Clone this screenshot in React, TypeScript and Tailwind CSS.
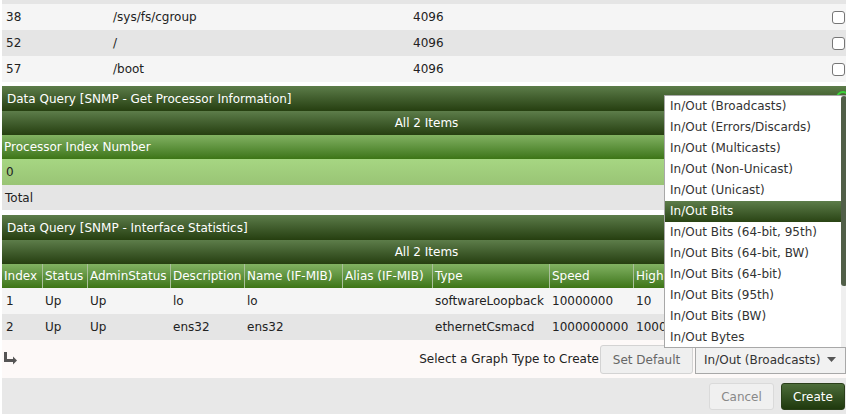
import React from 'react'

const titleBar = 'bg-linear-to-b from-[#5d7d4a] to-[#263f10] text-white'
const colBar = 'bg-linear-to-b from-[#82b262] to-[#3d7515] text-white'

const mounts = [
  { id: '38', path: '/sys/fs/cgroup', size: '4096', bg: 'bg-[#f5f5f5]' },
  { id: '52', path: '/', size: '4096', bg: 'bg-[#e5e5e5]' },
  { id: '57', path: '/boot', size: '4096', bg: 'bg-[#f5f5f5]' },
]

const ifCols = [
  { label: 'Index', w: 'w-[40px]' },
  { label: 'Status', w: 'w-[45px]' },
  { label: 'AdminStatus', w: 'w-[83px]' },
  { label: 'Description', w: 'w-[74px]' },
  { label: 'Name (IF-MIB)', w: 'w-[98px]' },
  { label: 'Alias (IF-MIB)', w: 'w-[90px]' },
  { label: 'Type', w: 'w-[117px]' },
  { label: 'Speed', w: 'w-[84px]' },
  { label: 'High', w: 'w-[120px]' },
]

const ifRows = [
  { cells: ['1', 'Up', 'Up', 'lo', 'lo', '', 'softwareLoopback', '10000000', '10'], bg: 'bg-[#f5f5f5]' },
  { cells: ['2', 'Up', 'Up', 'ens32', 'ens32', '', 'ethernetCsmacd', '1000000000', '1000'], bg: 'bg-[#e5e5e5]' },
]

const graphTypes = [
  'In/Out (Broadcasts)',
  'In/Out (Errors/Discards)',
  'In/Out (Multicasts)',
  'In/Out (Non-Unicast)',
  'In/Out (Unicast)',
  'In/Out Bits',
  'In/Out Bits (64-bit, 95th)',
  'In/Out Bits (64-bit, BW)',
  'In/Out Bits (64-bit)',
  'In/Out Bits (95th)',
  'In/Out Bits (BW)',
  'In/Out Bytes',
]

function Checkbox() {
  return <span className="block w-[13px] h-[13px] rounded-[3px] border border-[#767676] bg-white" />
}

function SectionHead({ title }: { title: string }) {
  return (
    <>
      <div className={`h-[25px] flex items-center pl-[5px] ${titleBar}`}>{title}</div>
      <div className={`h-[24px] flex items-center justify-center pl-[5px] ${titleBar}`}>All 2 Items</div>
    </>
  )
}

export default function App() {
  return (
    <div className="relative w-[846px] h-[414px] overflow-hidden bg-white text-[12px] text-[#222] font-['DejaVu_Sans',Verdana,sans-serif]">
      <div className="pl-[2px]">
        <div className="h-[4px] bg-[#e5e5e5]" />
        {mounts.map((m) => (
          <div key={m.id} className={`h-[26px] flex items-center ${m.bg}`}>
            <span className="w-[107px] pl-[4px]">{m.id}</span>
            <span className="w-[300px] pl-[4px]">{m.path}</span>
            <span className="flex-1 pl-[4px]">{m.size}</span>
            <span className="pr-[1px]"><Checkbox /></span>
          </div>
        ))}
        <div className="h-[4px]" />

        {/* processor information */}
        <SectionHead title="Data Query [SNMP - Get Processor Information]" />
        <div className={`h-[24px] flex items-center pl-[2px] ${colBar}`}>Processor Index Number</div>
        <div className="h-[26px] flex items-center pl-[4px] bg-linear-to-b from-[#a6d682] to-[#99c475]">0</div>
        <div className="h-[25px] flex items-center pl-[3px] bg-[#e5e5e5]">Total</div>
        <div className="h-[5px]" />

        {/* interface statistics */}
        <SectionHead title="Data Query [SNMP - Interface Statistics]" />
        <div className={`h-[24px] flex ${colBar}`}>
          {ifCols.map((c, i) => (
            <div
              key={c.label}
              className={`${c.w} shrink-0 flex items-center whitespace-nowrap overflow-hidden pl-[2px] ${i > 0 ? 'border-l border-[#a9bf9a]' : ''}`}
            >
              {c.label}
            </div>
          ))}
        </div>
        {ifRows.map((r) => (
          <div key={r.cells[0]} className={`h-[26px] flex ${r.bg}`}>
            {r.cells.map((v, i) => (
              <div
                key={i}
                className={`${ifCols[i].w} shrink-0 flex items-center whitespace-nowrap overflow-hidden ${i > 0 ? 'border-l border-transparent' : ''} ${i === 0 ? 'pl-[4px]' : 'pl-[2px]'}`}
              >
                {v}
              </div>
            ))}
          </div>
        ))}

        {/* graph type selector */}
        <div className="h-[38px] flex items-center bg-[#fdf9f8]">
          <svg className="ml-[2px] mb-[1px]" width="13" height="13" viewBox="0 0 13 13" fill="#555">
            <rect x="0" y="0" width="3" height="10" />
            <rect x="0" y="7" width="10" height="3" />
            <polygon points="9,4.5 13,8.5 9,12.5" />
          </svg>
          <span className="ml-auto mr-[1px] text-[#222]">Select a Graph Type to Create</span>
          <button className="h-[29px] w-[93px] mt-[1px] rounded-[3px] border border-[#d3d3d3] bg-[#efefef] text-[#666]">
            Set Default
          </button>
          <div className="ml-[2px] h-[29px] w-[151px] mt-[1px] border border-[#a8a8a8] bg-[#f1f1f1] flex items-center pl-[8px] pr-[9px] text-[#333]">
            <span className="flex-1">In/Out (Broadcasts)</span>
            <svg width="9" height="5" viewBox="0 0 9 5" fill="#555"><polygon points="0,0 9,0 4.5,5" /></svg>
          </div>
        </div>

        {/* actions */}
        <div className="h-[36px] bg-[#e8e8e8] flex justify-end items-start pt-[5px] pr-[1px] gap-[7px]">
          <button className="h-[27px] w-[65px] rounded-[3px] border border-[#dadada] bg-[#f0f0f0] text-[#888]">Cancel</button>
          <button className="h-[27px] w-[64px] rounded-[3px] border border-[#2a3f1a] bg-linear-to-b from-[#4d6d3a] to-[#1f390d] text-white">Create</button>
        </div>
      </div>

      {/* focus ring peeking from behind the list */}
      <div className="absolute left-[836px] top-[91px] w-[14px] h-[14px] rounded-full border-2 border-[#3ad33a]" />

      {/* open select list */}
      <div className="absolute left-[664px] top-[95px] w-[184px] h-[253px] bg-white border border-[#a8a8a8] flex">
        <ul className="w-[176px]">
          {graphTypes.map((g) => (
            <li
              key={g}
              className={`h-[21px] leading-[21px] pl-[5px] whitespace-nowrap ${
                g === 'In/Out Bits' ? 'bg-linear-to-b from-[#5d7d4a] to-[#2a4414] text-white' : 'text-[#333]'
              }`}
            >
              {g}
            </li>
          ))}
        </ul>
        <div className="w-[6px] bg-[#efefef] flex flex-col">
          <div className="h-[190px] bg-[#515f48] rounded-[3px]" />
        </div>
      </div>
    </div>
  )
}
